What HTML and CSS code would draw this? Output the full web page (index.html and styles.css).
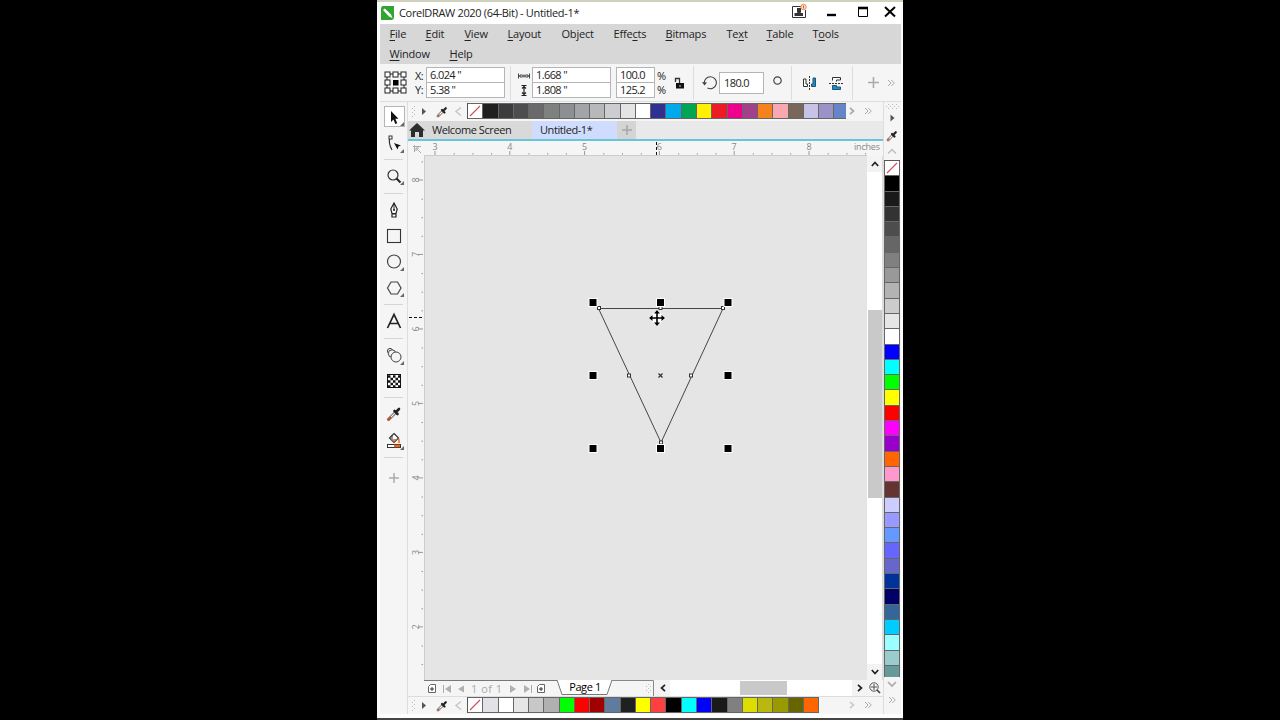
FILE: index.html
```html
<!DOCTYPE html>
<html lang="en">
<head>
    <meta charset="UTF-8">
    <title>CorelDRAW 2020 (64-Bit) - Untitled-1*</title>
    <link rel="stylesheet" href="styles.css">
</head>
<body>
    <!-- Shared icons -->
    <svg class="defs">
        <symbol id="dropper" viewBox="0 0 14 14">
            <path d="M2.500 11.500L8 6" stroke="#666" stroke-width="2.600"/>
            <path d="M3 11L8 6" stroke="#fff" stroke-width="1.100"/>
            <path d="M2 12L4.500 9.500" stroke="#b5704f" stroke-width="1.600"/>
            <path d="M7 5L9.500 7.500M8.800 5.200L10.800 3.200" stroke="#222" stroke-width="2.200" stroke-linecap="round"/>
        </symbol>
        <symbol id="chevron" viewBox="0 0 8 8">
            <path d="M2 0.8L5.500 4L2 7.200" fill="none" stroke="currentColor" stroke-width="1.700"/>
        </symbol>
        <symbol id="double" viewBox="0 0 8 8">
            <path d="M1 1L4 4L1 7M4.300 1L7.300 4L4.300 7" fill="none" stroke="#aaa" stroke-width="1"/>
        </symbol>
        <symbol id="page-add" viewBox="0 0 8 9">
            <path d="M2.500 .5H7.500V8.500H.5V2.500Z" fill="#fff" stroke="#666"/>
            <path d="M4 3V7M2 5H6" stroke="#333"/>
        </symbol>
        <symbol id="corner" viewBox="0 0 4 4"><path d="M4 0V4H0Z" fill="#666"/></symbol>
        <pattern id="dots" width="4" height="4" patternUnits="userSpaceOnUse">
            <rect width="1" height="1" fill="#bbb"/><rect x="2" y="2" width="1" height="1" fill="#bbb"/>
        </pattern>
    </svg>

    <div class="window">
        <div class="titlebar">
            <svg class="logo" width="15" height="14" viewBox="0 0 15 14">
                <path d="M3 0H14V11Q14 14 11 14H1V3Q1 0 3 0Z" fill="#31a431"/>
                <path d="M3 4L4.800 2.500L11 8.500L12.500 12L9 10.500Z" fill="#fff"/>
            </svg>
            <span class="title">CorelDRAW 2020 (64-Bit) - Untitled-1*</span>
            <svg class="controls" width="112" height="22" viewBox="789 2 112 22">
                <path d="M801 6.500H792.500V17.500H805.500V10" fill="none" stroke="#333"/>
                <path d="M797 8H801V12L800.500 13H803V16H794.500V13H797.500L797 12Z" fill="#333"/>
                <circle cx="803.500" cy="7" r="2.700" fill="#fbe3d2" stroke="#e5894c"/>
                <path d="M803.500 5.500V8.500" stroke="#d56427"/>
                <path d="M827 15H836" stroke="#000" stroke-width="2.400"/>
                <path d="M858.500 8V16.500H867.500V8" fill="none" stroke="#000"/>
                <path d="M858 8H868" stroke="#000" stroke-width="2.600"/>
                <path d="M885 7L895 16.500M895 7L885 16.500" stroke="#000" stroke-width="2"/>
            </svg>
        </div>

        <div class="menu">
            <span><u>F</u>ile</span><span><u>E</u>dit</span><span><u>V</u>iew</span><span><u>L</u>ayout</span><span>Object</span>
            <span>Effe<u>c</u>ts</span><span><u>B</u>itmaps</span><span>Te<u>x</u>t</span><span><u>T</u>able</span><span>T<u>o</u>ols</span>
            <span class="wide"><u>W</u>indow</span><span><u>H</u>elp</span>
        </div>

        <!-- Property bar -->
        <div class="props">
            <svg class="origin" width="23" height="23" viewBox="0 0 23 23">
                <path d="M3 3H20V20H3Z" fill="none" stroke="#222"/>
                <g fill="#fff" stroke="#222">
                    <rect x="1" y="1" width="5" height="5"/><rect x="9" y="1" width="5" height="5"/><rect x="17" y="1" width="5" height="5"/>
                    <rect x="1" y="9" width="5" height="5"/><rect x="17" y="9" width="5" height="5"/>
                    <rect x="1" y="17" width="5" height="5"/><rect x="9" y="17" width="5" height="5"/><rect x="17" y="17" width="5" height="5"/>
                </g>
                <rect x="9" y="9" width="5.500" height="5.500" fill="#000"/>
            </svg>
            <div class="labels"><span>X:</span><span>Y:</span></div>
            <div class="fields pos"><span>6.024 "</span><span>5.38 "</span></div>
            <i class="divider"></i>
            <svg class="size-icon" width="12" height="30" viewBox="0 0 12 30">
                <path d="M.5 5.500V10.500M11.500 5.500V10.500M1 8H11M3.500 6L1.500 8L3.500 10M8.500 6L10.500 8L8.500 10M5 6.500V9.500M7 6.500V9.500" fill="none" stroke="#444"/>
                <path d="M3.500 17.500H8.500M3.500 27.500H8.500M6 18V27M4 20.500L6 18.500L8 20.500M4 24.500L6 26.500L8 24.500" fill="none" stroke="#222" stroke-width="1.200"/>
            </svg>
            <div class="fields dim"><span>1.668 "</span><span>1.808 "</span></div>
            <div class="fields scale"><span>100.0</span><span>125.2</span></div>
            <div class="labels percent"><span>%</span><span>%</span></div>
            <svg class="lock" width="11" height="12" viewBox="0 0 11 12">
                <path d="M1.500 5V1.500H5.500V6" fill="none" stroke="#333" stroke-width="1.300"/>
                <rect x="2" y="6" width="8" height="5.500" fill="#111"/><path d="M6 8V10" stroke="#ccc"/>
            </svg>
            <i class="divider"></i>
            <svg class="rotate" width="15" height="15" viewBox="0 0 15 15">
                <path d="M2.500 9A6 6 0 1 1 5.500 13" fill="none" stroke="#444" stroke-width="1.100"/>
                <path d="M0 7L2.500 10.500L5 7.500Z" fill="#444"/>
            </svg>
            <div class="fields angle"><span>180.0</span></div>
            <svg class="degree" width="9" height="9" viewBox="0 0 9 9"><circle cx="4.500" cy="4.500" r="3.700" fill="none" stroke="#444" stroke-width="1.200"/></svg>
            <i class="divider"></i>
            <svg class="mirror" width="42" height="16" viewBox="0 0 42 16">
                <path d="M1.500 4V11.500H5.500V9H4V4Z" fill="#fff" stroke="#333"/>
                <path d="M7.500 1V15" stroke="#333" stroke-dasharray="2 1"/>
                <path d="M13.500 3V11.500H9.500V9H11V3Z" fill="#1690cc" stroke="#24556f"/>
                <path d="M30.500 5.500V2.500H38.500V5H34.500V6.500" fill="#fff" stroke="#333"/>
                <path d="M27 8.500H41" stroke="#333" stroke-dasharray="2 1"/>
                <path d="M30.500 10.500H34.500V12H38.500V14.500H30.500Z" fill="#1690cc" stroke="#24556f"/>
            </svg>
            <i class="divider"></i>
            <svg class="add" width="11" height="11" viewBox="0 0 11 11"><path d="M5.500 0V11M0 5.500H11" stroke="#aaa" stroke-width="1.600"/></svg>
            <svg class="more" width="8" height="8"><use href="#double"/></svg>
        </div>

        <div class="workspace">
            <div class="toolbox">
                <div class="group g1">
                    <svg class="tool" viewBox="0 0 28 26">
                        <rect x="4.500" y="2.500" width="20" height="20" fill="#fff" stroke="#b5b5b5"/>
                        <path d="M11 7V18L13.500 15.500L15.300 20L17.200 19.200L15.400 14.800H18.500Z" fill="#111"/>
                        <use href="#corner" x="20" y="18" width="4" height="4"/>
                    </svg>
                    <svg class="tool" viewBox="0 0 28 26">
                        <path d="M10 7Q8 13 12 20" fill="none" stroke="#333" stroke-width="1.200"/><rect x="9" y="6" width="3" height="3" fill="#fff" stroke="#333"/>
                        <path d="M14 13L21 15.500L18.500 16.500L17.500 19.500Z" fill="#111"/><use href="#corner" x="20" y="19" width="4" height="4"/>
                    </svg>
                </div>
                <div class="group g2">
                    <svg class="tool" viewBox="0 0 28 26">
                        <circle cx="13" cy="12" r="5" fill="none" stroke="#333" stroke-width="1.200"/><path d="M16.500 15.500L20.500 19.500" stroke="#222" stroke-width="2"/>
                        <use href="#corner" x="20" y="18" width="4" height="4"/>
                    </svg>
                </div>
                <div class="group g3">
                    <svg class="tool" viewBox="0 0 28 26">
                        <path d="M14 6L10.800 12L12 16.500H16L17.200 12ZM12 17H16V20H12Z" fill="#fff" stroke="#222" stroke-width="1.200"/><path d="M14 7V13" stroke="#222"/><circle cx="14" cy="13" r="1" fill="#222"/>
                    </svg>
                    <svg class="tool" viewBox="0 0 28 26"><rect x="7.500" y="6.500" width="13" height="13" fill="none" stroke="#333" stroke-width="1.100"/></svg>
                    <svg class="tool" viewBox="0 0 28 26">
                        <circle cx="14" cy="12.500" r="6.500" fill="none" stroke="#444" stroke-width="1.200"/><use href="#corner" x="20" y="18" width="4" height="4"/>
                    </svg>
                    <svg class="tool" viewBox="0 0 28 26">
                        <path d="M7.500 13L11 7H17.500L21 13L17.500 19H11Z" fill="none" stroke="#444" stroke-width="1.200"/><use href="#corner" x="20" y="18" width="4" height="4"/>
                    </svg>
                </div>
                <div class="group g4">
                    <svg class="tool" viewBox="0 0 28 26"><path d="M7.500 20L14 6.500L20.500 20M9.700 15.500H18.300" fill="none" stroke="#222" stroke-width="1.700"/></svg>
                </div>
                <div class="group g5">
                    <svg class="tool" viewBox="0 0 28 26">
                        <g fill="#f5f5f5" stroke="#444"><circle cx="10" cy="9" r="2.600"/><circle cx="12" cy="11.500" r="3.700"/><circle cx="16" cy="15" r="5"/></g>
                        <use href="#corner" x="20" y="19" width="4" height="4"/>
                    </svg>
                    <svg class="tool" viewBox="0 0 28 26">
                        <rect x="7.500" y="6.500" width="13" height="13" fill="#fff" stroke="#111"/>
                        <path d="M8 8.500H20M8 13.500H20M8 18.500H20" stroke="#111" stroke-width="2.500" stroke-dasharray="2.500 2.500"/>
                        <path d="M10.500 11H20M10.500 16H20" stroke="#111" stroke-width="2.500" stroke-dasharray="2.500 2.500"/>
                    </svg>
                </div>
                <div class="group g6">
                    <svg class="tool" viewBox="0 0 28 26">
                        <path d="M8 19L16 11" stroke="#555" stroke-width="3"/><path d="M10 17L16 11" stroke="#eee" stroke-width="1.300"/>
                        <path d="M7.500 19.500L11 16" stroke="#c05a20" stroke-width="2.200"/>
                        <path d="M14.500 10L17.500 13M16.500 10.500L19 8" stroke="#222" stroke-width="2.600" stroke-linecap="round"/>
                    </svg>
                    <svg class="tool" viewBox="0 0 28 26">
                        <path d="M14 6.500L18.500 11L14 15.500L9.500 11Z" fill="#fff" stroke="#333" stroke-width="1.200"/><path d="M12 8V12" stroke="#333"/>
                        <path d="M11 12H17L14 15Z" fill="#d98558"/><path d="M19 12V16" stroke="#e66a22" stroke-width="1.500"/>
                        <rect x="7.500" y="17.500" width="13" height="3" fill="#fff" stroke="#333"/><path d="M14 19H20" stroke="#e66a22" stroke-width="2.500"/>
                        <use href="#corner" x="20" y="19" width="4" height="4"/>
                    </svg>
                </div>
                <div class="group g7">
                    <svg class="tool" viewBox="0 0 28 26"><path d="M14 8V18M9 13H19" stroke="#aaa" stroke-width="1.500"/></svg>
                </div>
            </div>

            <div class="main">
                <div class="palette">
                    <svg class="lead" width="59" height="17" viewBox="408 103 59 17">
                        <rect x="411" y="105" width="5" height="13" fill="url(#dots)"/>
                        <path d="M422 108V115L426 111.500Z" fill="#555"/>
                        <use href="#dropper" x="435" y="105" width="14" height="14"/>
                        <path d="M461 107.500L456 111.500L461 115.500" fill="none" stroke="#c4c4c4" stroke-width="1.400"/>
                    </svg>
                    <div class="swatches" id="top-colors"></div>
                    <svg class="next mid" width="8" height="8"><use href="#chevron"/></svg>
                    <svg class="more" width="8" height="8"><use href="#double"/></svg>
                </div>

                <div class="tabs">
                    <div class="tab welcome">
                        <svg width="16" height="14" viewBox="0 0 16 14"><path d="M8 0L16 7.500H14V14H10V9H6V14H2V7.500H0Z" fill="#2d2d2d"/></svg>
                        <span>Welcome Screen</span>
                    </div>
                    <div class="tab active"><span>Untitled-1*</span></div>
                    <div class="tab new"><svg width="10" height="10" viewBox="0 0 10 10"><path d="M5 0V10M0 5H10" stroke="#a5a5a5" stroke-width="1.500"/></svg></div>
                </div>

                <div class="document">
                    <svg class="ruler-corner" width="16" height="15" viewBox="0 0 16 15"><path d="M6.500 4V11M5 5.500H13M8 7L13 12M8 10V7H11" fill="none" stroke="#aaa"/></svg>
                    <svg class="ruler-h" id="ruler-h" width="459" height="15" viewBox="424 141 459 15"></svg>
                    <svg class="ruler-v" id="ruler-v" width="17" height="524" viewBox="408 156 17 524"></svg>
                    <svg class="canvas" width="442" height="524" viewBox="425 156 442 524">
                        <path d="M598.500 308.500H723L661 442.500Z" fill="none" stroke="#333" stroke-width=".9"/>
                        <g fill="#fff" stroke="#333">
                            <rect x="597.500" y="306.500" width="3" height="3"/><rect x="659" y="306.500" width="3" height="3"/><rect x="721.500" y="306.500" width="3" height="3"/>
                            <rect x="627.500" y="374" width="3" height="3"/><rect x="689.500" y="374" width="3" height="3"/><rect x="659.500" y="441" width="3" height="3"/>
                        </g>
                        <g id="handles" fill="#000" stroke="#fff"></g>
                        <path d="M658.500 373.500L662.500 377.500M662.500 373.500L658.500 377.500" stroke="#333" stroke-width="1.200"/>
                        <path d="M657 309.500L665.500 318L657 326.500L648.500 318Z" fill="#fff"/>
                        <path d="M657 312V324M651 318H663" stroke="#000" stroke-width="1.600"/>
                        <path d="M657 310L660 313.500H654ZM657 326L660 322.500H654ZM649 318L652.500 315V321ZM665 318L661.500 315V321Z"/>
                    </svg>
                    <div class="vscroll">
                        <div class="btn"><svg width="8" height="8" class="up"><use href="#chevron"/></svg></div>
                        <div class="vthumb"></div>
                        <div class="btn"><svg width="8" height="8" class="down"><use href="#chevron"/></svg></div>
                    </div>
                </div>

                <div class="pagebar">
                    <div class="pages">
                        <svg width="8" height="9"><use href="#page-add"/></svg>
                        <svg width="24" height="8" viewBox="0 0 24 8"><path d="M1.500 0V8" stroke="#aaa"/><path d="M9 0V8L3 4ZM22 0.500V7.500L16 4Z" fill="#b0b0b0"/></svg>
                        <span class="count">1 of 1</span>
                        <svg width="24" height="8" viewBox="0 0 24 8"><path d="M22.500 0V8" stroke="#aaa"/><path d="M15 0V8L21 4ZM1 0V8L7 4Z" fill="#b0b0b0"/></svg>
                        <svg width="8" height="9"><use href="#page-add"/></svg>
                    </div>
                    <div class="page-tab">
                        <svg width="56" height="16" viewBox="0 0 56 16"><path d="M0 0L5 14.500H50L55 0" fill="#fff" stroke="#777"/></svg>
                        <span>Page 1</span>
                    </div>
                    <svg class="grip" width="43" height="16" viewBox="0 0 43 16"><path d="M0 .5H41.500V16" fill="none" stroke="#888"/><rect x="33" y="3" width="6" height="11" fill="url(#dots)"/></svg>
                    <div class="hscroll">
                        <div class="btn"><svg width="8" height="8" class="left"><use href="#chevron"/></svg></div>
                        <div class="track"><div class="hthumb"></div></div>
                        <div class="btn"><svg width="8" height="8"><use href="#chevron"/></svg></div>
                    </div>
                    <svg class="nav-zoom" width="16" height="16" viewBox="0 0 16 16">
                        <circle cx="7" cy="7" r="4.200" fill="none" stroke="#555"/><path d="M7 4V10M4 7H10" stroke="#555"/><path d="M10 10L13 13" stroke="#444" stroke-width="1.700"/>
                    </svg>
                </div>

                <div class="palette bottom">
                    <svg class="lead" width="59" height="17" viewBox="408 103 59 17">
                        <rect x="411" y="105" width="5" height="13" fill="url(#dots)"/>
                        <path d="M422 108V115L426 111.500Z" fill="#555"/>
                        <use href="#dropper" x="435" y="105" width="14" height="14"/>
                        <path d="M461 107.500L456 111.500L461 115.500" fill="none" stroke="#c4c4c4" stroke-width="1.400"/>
                    </svg>
                    <div class="swatches" id="bottom-colors"></div>
                    <svg class="next" width="8" height="8"><use href="#chevron"/></svg>
                    <svg class="more" width="8" height="8"><use href="#double"/></svg>
                </div>
            </div>

            <div class="side">
                <svg width="18" height="58" viewBox="883 102 18 58">
                    <rect x="886" y="104" width="13" height="5" fill="url(#dots)"/>
                    <path d="M890.500 114.500V121.500L894.500 118Z" fill="#555"/>
                    <use href="#dropper" x="885" y="129" width="14" height="14"/>
                    <path d="M888 153.500L892 149.500L896 153.500" fill="none" stroke="#bbb" stroke-width="1.300"/>
                </svg>
                <div class="swatches vertical" id="side-colors"></div>
                <svg class="side-end" width="18" height="30" viewBox="0 0 18 30">
                    <path d="M5 5L9 9L13 5" fill="none" stroke="#aaa" stroke-width="1.700"/><use href="#double" x="5" y="19" width="8" height="8"/>
                </svg>
            </div>
        </div>
    </div>

    <script>
        var topColors = ['none', '#202020', '#3c3c3e', '#4d4d4f', '#69696b', '#7f8180', '#8d8f92', '#a2a4a7', '#b6b8ba', '#cccdd0', '#e4e4e6', '#ffffff',
            '#2e3192', '#00a8ec', '#00a651', '#fff200', '#ed1c24', '#ec008c', '#a3408a', '#f5821f', '#f9a7b0', '#7a675c', '#c7c3e6', '#9b93c8', '#6485c8'];
        var bottomColors = ['none', '#e0e2e5', '#ffffff', '#e6e6e6', '#c8c8c8', '#b0b0b0', '#00ff00', '#ff0000', '#a00000', '#5f7c9f', '#202020', '#ffff00',
            '#ff4040', '#000000', '#00ffff', '#0000ff', '#1a1a1a', '#808080', '#dddd00', '#b8b810', '#999a00', '#666600', '#ff6600'];
        var sideColors = ['none', '#000000', '#1a1a1a', '#333333', '#4d4d4d', '#666666', '#808080', '#999999', '#b3b3b3', '#cccccc', '#e6e6e6', '#ffffff',
            '#0000ff', '#00ffff', '#00ff00', '#ffff00', '#ff0000', '#ff00ff', '#9900cc', '#ff6600', '#ff99cc', '#663333', '#ccccff', '#9999ff', '#6699ff',
            '#6666ff', '#6666cc', '#003399', '#000066', '#336699', '#00ccff', '#99ffff', '#99cccc', '#669999'];

        function fillPalette(id, colors) {
            var html = '';
            colors.forEach(function (c) {
                if (c === 'none') {
                    html += '<div class="swatch"><svg width="14" height="14"><path d="M2 12L12 2" stroke="#d0495a" stroke-width="1.1"/></svg></div>';
                } else {
                    html += '<div class="swatch" style="background:' + c + '"></div>';
                }
            });
            document.getElementById(id).innerHTML = html;
        }
        fillPalette('top-colors', topColors);
        fillPalette('bottom-colors', bottomColors);
        fillPalette('side-colors', sideColors);

        // Rulers: a number on every inch, a dot on every quarter
        var h = '<path d="M424 155.500H867" stroke="#ccc"/>';
        for (var i = 0; i < 24; i++) {
            var x = 435 + i * 18.7;
            if (i % 4 === 0) {
                h += '<path d="M' + x + ' 151V155" stroke="#999"/><text x="' + x + '" y="150" text-anchor="middle">' + (3 + i / 4) + '</text>';
            } else {
                h += '<rect x="' + x + '" y="153" width="1" height="1.500" fill="#999"/>';
            }
        }
        h += '<text x="854" y="150" textLength="26">inches</text><path d="M656.500 142V155" stroke="#111" stroke-dasharray="3 2"/>';
        document.getElementById('ruler-h').innerHTML = h;

        var v = '<path d="M424.500 156V680" stroke="#ccc"/>';
        for (var j = -1; j < 27; j++) {
            var y = 180 + j * 18.62;
            if (j % 4 === 0) {
                v += '<path d="M418 ' + y + 'H423" stroke="#999"/><text transform="translate(419 ' + y + ') rotate(-90)" text-anchor="middle">' + (8 - j / 4) + '</text>';
            } else {
                v += '<rect x="421.500" y="' + y + '" width="1.500" height="1" fill="#999"/>';
            }
        }
        v += '<path d="M409 317.500H423" stroke="#111" stroke-dasharray="3 2"/>';
        document.getElementById('ruler-v').innerHTML = v;

        // Selection handles
        var boxes = '';
        [593, 660.5, 728].forEach(function (hx) {
            [302.5, 375.5, 448.5].forEach(function (hy) {
                if (hx === 660.5 && hy === 375.5) return;
                boxes += '<rect x="' + (hx - 4) + '" y="' + (hy - 4) + '" width="8" height="8"/>';
            });
        });
        document.getElementById('handles').innerHTML = boxes;
    </script>
</body>
</html>
```
FILE: styles.css
```css
* {
    box-sizing: border-box;
}
body {
    margin: 0;
    height: 720px;
    overflow: hidden;
    background: #000;
    font-family: "Open Sans", "Noto Sans", sans-serif;
    font-size: 11px;
    color: #222;
}
svg {
    display: block;
    flex-shrink: 0;
}
.defs {
    position: absolute;
    width: 0;
    height: 0;
}
.window {
    width: 526px;
    height: 720px;
    margin-left: 377px;
    padding: 0 2px 0 3px;
    background: #fdfdfd;
    border-top: 2px solid #cfd0bd;
    border-bottom: 2px solid #444;
}
.titlebar {
    display: flex;
    align-items: center;
    height: 22px;
    background: #fff;
}
.title {
    flex: 1;
    margin-left: 4px;
    padding-bottom: 1px;
    white-space: nowrap;
    font-size: 11px;
    letter-spacing: -0.33px;
}
.menu {
    display: grid;
    grid-template-columns: 36px 39px 43px 54px 52px 52px 61px 40px 46px 40px;
    grid-template-rows: 20px 20px;
    height: 40px;
    padding-left: 9.5px;
    line-height: 20px;
    letter-spacing: -0.2px;
    background: #d7d7d7;
}
.menu u {
    text-underline-offset: 2px;
    text-decoration-thickness: 1px;
}
.menu .wide {
    width: 60px;
}
.menu .wide + span {
    padding-left: 24px;
}

/* Property bar */
.props {
    display: flex;
    align-items: center;
    height: 38px;
    background: #f5f5f5;
    border-bottom: 1px solid #ddd;
}
.origin {
    margin-left: 4px;
}
.labels {
    display: flex;
    flex-direction: column;
    width: 11px;
    margin-left: 8px;
    line-height: 14px;
    letter-spacing: -0.5px;
}
.fields {
    border: 1px solid #b5b5b5;
    background: #fff;
    letter-spacing: -0.6px;
}
.fields span {
    display: block;
    height: 14px;
    padding-left: 3px;
    line-height: 14px;
}
.fields span + span {
    height: 15px;
    border-top: 1px solid #b5b5b5;
}
.pos {
    width: 79px;
}
.divider {
    width: 1px;
    height: 34px;
    margin-left: 5px;
    background: #ddd;
}
.size-icon {
    margin-left: 7px;
}
.dim {
    width: 79px;
    margin-left: 2px;
}
.scale {
    width: 39px;
    margin-left: 5px;
}
.percent {
    margin-left: 2px;
}
.lock {
    margin-left: 6px;
}
.lock + .divider {
    margin-left: 8px;
}
.rotate {
    margin-left: 8px;
}
.angle {
    width: 45px;
    margin-left: 2px;
}
.angle span {
    height: 20px;
    line-height: 20px;
    padding-left: 4px;
}
.degree {
    margin: 0 4px 5px 9px;
}
.mirror {
    margin-left: 10px;
}
.mirror + .divider {
    margin-left: 8px;
}
.add {
    margin-left: 15px;
}
.add + .more {
    margin-left: 8px;
}

.workspace {
    display: flex;
    height: 612px;
}

/* Toolbox */
.toolbox {
    width: 28px;
    background: #f5f5f5;
    border-right: 1px solid #ddd;
}
.group {
    display: flex;
    flex-direction: column;
    justify-content: center;
    border-bottom: 1px solid #d5d5d5;
    margin: 0 4px;
}
.tool {
    width: 28px;
    height: 26px;
    margin-left: -4px;
}
.g1 { height: 58px; padding-bottom: 1px; }
.g2 { height: 34px; padding-bottom: 1px; }
.g3 { height: 111px; }
.g4 { height: 34px; padding-bottom: 1px; }
.g5 { height: 59px; }
.g6 { height: 60px; padding-bottom: 1px; }
.g7 { height: 40px; border: 0; }

.main {
    width: 475px;
}

/* Colour palettes */
.palette {
    display: flex;
    align-items: center;
    height: 19px;
    padding-bottom: 1px;
    background: #f5f5f5;
}
.swatches {
    display: flex;
    width: 379px;
    height: 16px;
    overflow: hidden;
    border-left: 1px solid #555;
}
.swatch {
    flex: 0 0 15.27px;
    height: 16px;
    background: #fff;
    border: solid #666;
    border-width: 1px 1px 1px 0;
}
.next {
    margin-left: 2px;
    color: #ccc;
}
.next.mid {
    color: #aaa;
}
.palette .more {
    margin-left: 8px;
}
.palette.bottom {
    height: 18px;
    border-top: 1px solid #ddd;
}
.vertical {
    display: block;
    width: 16px;
    height: 517px;
    border-left: 0;
    border-top: 1px solid #555;
}
.vertical .swatch {
    height: 15.3px;
    border-width: 0 1px 1px 1px;
}

/* Document tabs */
.tabs {
    display: flex;
    height: 20px;
    background: #e9e9e9;
    border-bottom: 2px solid #67c5d9;
    letter-spacing: -0.42px;
}
.tab {
    display: flex;
    align-items: center;
    line-height: 18px;
}
.welcome {
    width: 124px;
    padding-left: 1px;
    background: #d9d9d9;
}
.welcome span {
    margin-left: 7px;
}
.active {
    width: 85px;
    padding-left: 8px;
    background: #d0dcfd;
}
.new {
    width: 19px;
    justify-content: center;
    background: #d4d4d4;
}

.document {
    display: grid;
    grid-template-columns: 16px 1px 442px 16px;
    grid-template-rows: 15px 524px;
    background: #f5f5f5;
}
.ruler-h {
    grid-column: span 3;
}
.ruler-v {
    grid-column: span 2;
}
.ruler-h text,
.ruler-v text {
    font-size: 9px;
    fill: #888;
}
.canvas {
    background: #e5e5e5;
}
.vscroll {
    display: flex;
    flex-direction: column;
    justify-content: space-between;
    background: #fff;
    border-right: 1px solid #ddd;
}
.btn {
    display: flex;
    align-items: center;
    justify-content: center;
    width: 15px;
    height: 16px;
    background: #f3f3f3;
}
.up { transform: rotate(-90deg); }
.down { transform: rotate(90deg); }
.left { transform: rotate(180deg); }
.vthumb {
    width: 14px;
    height: 188px;
    margin: 0 0 29px 1px;
    background: #c9c9c9;
}

/* Page navigator */
.pagebar {
    display: flex;
    height: 16px;
    padding-left: 16px;
    background: #f5f5f5;
}
.pages {
    display: flex;
    align-items: center;
    width: 133px;
    padding-left: 4px;
    border-top: 1px solid #777;
}
.pages svg + svg {
    margin-left: 6px;
}
.count {
    width: 32px;
    margin: 0 6px 1px 5px;
    white-space: nowrap;
    letter-spacing: 0.5px;
    color: #aaa;
}
.pages .count + svg + svg {
    margin-left: 4px;
}
.page-tab {
    display: grid;
    width: 55px;
}
.page-tab svg,
.page-tab span {
    grid-area: 1 / 1;
}
.page-tab span {
    z-index: 1;
    text-align: center;
    line-height: 14px;
    letter-spacing: -0.4px;
    color: #000;
}
.grip {
    margin-left: 0;
}
.hscroll {
    display: flex;
    width: 212px;
}
.track {
    flex: 1;
    padding-top: 1px;
    background: #fff;
}
.hthumb {
    width: 47px;
    height: 14px;
    margin-left: 70px;
    background: #c9c9c9;
}

.side {
    width: 18px;
    background: #f5f5f5;
    border-left: 1px solid #ddd;
}
.side > svg {
    margin-left: -1px;
}
```
